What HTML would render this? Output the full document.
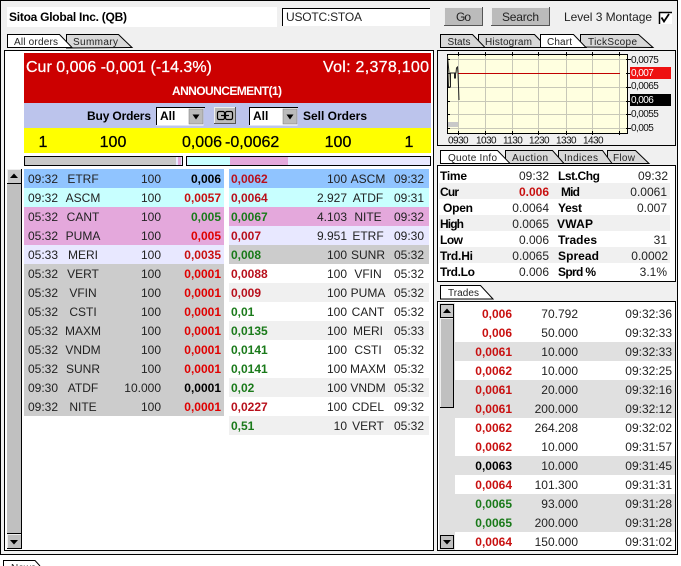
<!DOCTYPE html>
<html><head><meta charset="utf-8"><style>
html,body{margin:0;padding:0;background:#fff;width:681px;height:566px;overflow:hidden}
svg{display:block;font-family:"Liberation Sans",Arial,sans-serif;font-size:12px;fill:#222}
.e{text-anchor:end}.m{text-anchor:middle}.b{font-weight:bold}
.k{fill:#000}.w{fill:#fff}
.r1{fill:#e00000}.r2{fill:#b8101c}.r3{fill:#c81010}.g{fill:#1a7a1a}
.t{font-size:10px}
.y{font-size:16px;fill:#000;stroke:#000;stroke-width:.25px}
.cu{font-size:16px;fill:#fff;stroke:#fff;stroke-width:.25px}
.c{font-size:10px;fill:#111;letter-spacing:-.55px}
.tab{stroke:#000;stroke-width:1}
.q{font-weight:bold;fill:#000}
</style></head><body>
<svg width="681" height="566" viewBox="0 0 681 566" xmlns="http://www.w3.org/2000/svg">
<!-- frame -->
<rect x="0.5" y="0.5" width="677" height="554" fill="#f0f0f0" stroke="#000"/>
<rect x="678" y="0" width="3" height="566" fill="#fff"/>

<!-- top bar -->
<rect x="7" y="7" width="270" height="20" fill="#fff"/>
<text x="9" y="21" class="b k" textLength="118">Sitoa Global Inc. (QB)</text>
<rect x="282" y="8" width="148" height="18" fill="#fff"/>
<path d="M282.500 26V8.500H430" fill="none" stroke="#000"/>
<text x="286" y="21" textLength="76">USOTC:STOA</text>
<rect x="444" y="7" width="39" height="19" fill="#bbb"/>
<path d="M444.500 26V7.500H483" fill="none" stroke="#eee"/><path d="M444 25.500H482.500V7" fill="none" stroke="#555"/>
<text x="456" y="21" textLength="15">Go</text>
<rect x="491" y="7" width="59" height="19" fill="#bbb"/>
<path d="M491.500 26V7.500H550" fill="none" stroke="#eee"/><path d="M491 25.500H549.500V7" fill="none" stroke="#555"/>
<text x="502" y="21" textLength="37">Search</text>
<text x="564" y="21" textLength="88">Level 3 Montage</text>
<rect x="659" y="12" width="13" height="12" fill="#fff"/>
<path d="M659.500 24V12.500H672" fill="none" stroke="#000" stroke-width="1.500"/>
<path d="M661.500 17.500l2.500 4 5-7.500" fill="none" stroke="#000" stroke-width="1.800"/>

<!-- left tabs -->
<polygon class="tab" points="66.500,48 66.500,34.500 118.500,34.500 132,47.500" fill="#d8d8d8"/>
<polygon class="tab" points="7.500,47.500 7.500,34.500 59.500,34.500 72,47.500" fill="#fff"/>
<text x="14" y="45" class="t" textLength="44">All orders</text>
<text x="73" y="45" class="t" textLength="45">Summary</text>

<!-- left panel -->
<rect x="4.500" y="50.500" width="429" height="500" fill="#fff" stroke="#000"/>
<rect x="24" y="53" width="407" height="50" fill="#cc0000"/>
<text x="26" y="72" class="cu">Cur 0,006 -0,001 (-14.3%)</text>
<text x="323" y="72" class="cu" textLength="106">Vol: 2,378,100</text>
<text x="172" y="95" class="b w" textLength="110">ANNOUNCEMENT(1)</text>
<rect x="24" y="103" width="407" height="25" fill="#bcc4ec"/>
<text x="87" y="120" class="q" textLength="64">Buy Orders</text>
<rect x="156.500" y="107.500" width="47" height="18" fill="#fff"/>
<path d="M156.500 125V107.500H205" fill="none" stroke="#000"/>
<text x="160" y="120" class="q">All</text>
<rect x="189" y="109" width="14" height="15" fill="#bbb" stroke="#777" stroke-width=".5"/>
<path d="M192.500 114.500h7l-3.500 5z" fill="#000"/>
<rect x="214" y="107" width="22" height="17" fill="#bbb"/>
<path d="M214.500 124V107.500H236" fill="none" stroke="#eee"/><path d="M214 123.500H235.500V107" fill="none" stroke="#555"/>
<rect x="217.500" y="111.500" width="7" height="8" rx="1.500" fill="none" stroke="#000" stroke-width="1.200"/>
<rect x="225.500" y="111.500" width="7" height="8" rx="1.500" fill="none" stroke="#000" stroke-width="1.200"/>
<path d="M221 115.500h8" stroke="#000" stroke-width="1.200"/>
<rect x="249.500" y="107.500" width="48" height="18" fill="#fff"/>
<path d="M249.500 125V107.500H298" fill="none" stroke="#000"/>
<text x="253" y="120" class="q">All</text>
<rect x="283" y="109" width="14" height="15" fill="#bbb" stroke="#777" stroke-width=".5"/>
<path d="M286.500 114.500h7l-3.500 5z" fill="#000"/>
<text x="303" y="120" class="q" textLength="64">Sell Orders</text>
<rect x="24" y="128" width="407" height="25" fill="#ffff00"/>
<text x="43" y="147" class="m y">1</text>
<text x="113" y="147" class="m y">100</text>
<text x="222" y="147" class="e y">0,006</text>
<text x="225" y="147" class="y">-0,0062</text>
<text x="338" y="147" class="m y">100</text>
<text x="409" y="147" class="m y">1</text>
<!-- depth bars -->
<rect x="24.500" y="156.500" width="158" height="9" fill="#c8c8c8" stroke="#000"/>
<rect x="176" y="157" width="2" height="8" fill="#e8e8ff"/><rect x="178" y="157" width="3" height="8" fill="#e4a8dc"/><rect x="181" y="157" width="1" height="8" fill="#e8e8ff"/>
<rect x="186.500" y="156.500" width="244" height="9" fill="#e8e8ff" stroke="#000"/>
<rect x="188" y="157" width="42" height="8" fill="#c8ffff"/><rect x="230" y="157" width="58" height="8" fill="#e4a8dc"/>
<!-- left scrollbar -->
<rect x="7" y="169" width="15" height="380" fill="#c0c0c0"/>
<rect x="7.500" y="169.500" width="14" height="14" fill="#c8c8c8"/>
<path d="M7.500 183V169.500H21" fill="none" stroke="#eee"/>
<path d="M7 183.500H21.500V169M21.500 184V548" fill="none" stroke="#000"/>
<path d="M10 178h8l-4-4.500z" fill="#000"/>
<path d="M7 533.500H22" stroke="#000"/>
<rect x="8" y="534" width="13" height="14" fill="#c0c0c0"/>
<path d="M7.500 548V534.500H21" fill="none" stroke="#eee"/>
<path d="M7 548.500H21.500V534" fill="none" stroke="#000"/>
<path d="M10 540h8l-4 4.500z" fill="#000"/>

<!-- left rows -->
<rect x="24" y="169" width="200" height="19" fill="#90c4ff"/>
<rect x="24" y="188" width="200" height="19" fill="#c8ffff"/>
<rect x="24" y="207" width="200" height="38" fill="#e4a8dc"/>
<rect x="24" y="245" width="200" height="19" fill="#e8e8ff"/>
<rect x="24" y="264" width="200" height="152" fill="#cccccc"/>
<text x="28" y="183">09:32</text><text x="83" y="183" class="m">ETRF</text><text x="161" y="183" class="e">100</text><text x="221" y="183" class="e b k">0,006</text>
<text x="28" y="202">09:32</text><text x="83" y="202" class="m">ASCM</text><text x="161" y="202" class="e">100</text><text x="221" y="202" class="e b r3">0,0057</text>
<text x="28" y="221">05:32</text><text x="83" y="221" class="m">CANT</text><text x="161" y="221" class="e">100</text><text x="221" y="221" class="e b g">0,005</text>
<text x="28" y="240">05:32</text><text x="83" y="240" class="m">PUMA</text><text x="161" y="240" class="e">100</text><text x="221" y="240" class="e b r1">0,005</text>
<text x="28" y="259">05:33</text><text x="83" y="259" class="m">MERI</text><text x="161" y="259" class="e">100</text><text x="221" y="259" class="e b r3">0,0035</text>
<text x="28" y="278">05:32</text><text x="83" y="278" class="m">VERT</text><text x="161" y="278" class="e">100</text><text x="221" y="278" class="e b r1">0,0001</text>
<text x="28" y="297">05:32</text><text x="83" y="297" class="m">VFIN</text><text x="161" y="297" class="e">100</text><text x="221" y="297" class="e b r1">0,0001</text>
<text x="28" y="316">05:32</text><text x="83" y="316" class="m">CSTI</text><text x="161" y="316" class="e">100</text><text x="221" y="316" class="e b r1">0,0001</text>
<text x="28" y="335">05:32</text><text x="83" y="335" class="m">MAXM</text><text x="161" y="335" class="e">100</text><text x="221" y="335" class="e b r1">0,0001</text>
<text x="28" y="354">05:32</text><text x="83" y="354" class="m">VNDM</text><text x="161" y="354" class="e">100</text><text x="221" y="354" class="e b r1">0,0001</text>
<text x="28" y="373">05:32</text><text x="83" y="373" class="m">SUNR</text><text x="161" y="373" class="e">100</text><text x="221" y="373" class="e b r1">0,0001</text>
<text x="28" y="392">09:30</text><text x="83" y="392" class="m">ATDF</text><text x="161" y="392" class="e">10.000</text><text x="221" y="392" class="e b k">0,0001</text>
<text x="28" y="411">09:32</text><text x="83" y="411" class="m">NITE</text><text x="161" y="411" class="e">100</text><text x="221" y="411" class="e b r1">0,0001</text>

<!-- right rows -->
<rect x="229" y="169" width="200" height="19" fill="#90c4ff"/>
<rect x="229" y="188" width="200" height="19" fill="#c8ffff"/>
<rect x="229" y="207" width="200" height="19" fill="#e4a8dc"/>
<rect x="229" y="226" width="200" height="19" fill="#e8e8ff"/>
<rect x="229" y="245" width="200" height="19" fill="#cccccc"/>
<rect x="229" y="283" width="200" height="19" fill="#f0f0f0"/>
<rect x="229" y="321" width="200" height="19" fill="#f0f0f0"/>
<rect x="229" y="378" width="200" height="19" fill="#f0f0f0"/>
<rect x="229" y="416" width="200" height="19" fill="#f0f0f0"/>
<text x="231" y="183" class="b r2">0,0062</text><text x="347" y="183" class="e">100</text><text x="368" y="183" class="m">ASCM</text><text x="424" y="183" class="e">09:32</text>
<text x="231" y="202" class="b r2">0,0064</text><text x="347" y="202" class="e">2.927</text><text x="368" y="202" class="m">ATDF</text><text x="424" y="202" class="e">09:31</text>
<text x="231" y="221" class="b g">0,0067</text><text x="347" y="221" class="e">4.103</text><text x="368" y="221" class="m">NITE</text><text x="424" y="221" class="e">09:32</text>
<text x="231" y="240" class="b r2">0,007</text><text x="347" y="240" class="e">9.951</text><text x="368" y="240" class="m">ETRF</text><text x="424" y="240" class="e">09:30</text>
<text x="231" y="259" class="b g">0,008</text><text x="347" y="259" class="e">100</text><text x="368" y="259" class="m">SUNR</text><text x="424" y="259" class="e">05:32</text>
<text x="231" y="278" class="b r2">0,0088</text><text x="347" y="278" class="e">100</text><text x="368" y="278" class="m">VFIN</text><text x="424" y="278" class="e">05:32</text>
<text x="231" y="297" class="b r2">0,009</text><text x="347" y="297" class="e">100</text><text x="368" y="297" class="m">PUMA</text><text x="424" y="297" class="e">05:32</text>
<text x="231" y="316" class="b g">0,01</text><text x="347" y="316" class="e">100</text><text x="368" y="316" class="m">CANT</text><text x="424" y="316" class="e">05:32</text>
<text x="231" y="335" class="b g">0,0135</text><text x="347" y="335" class="e">100</text><text x="368" y="335" class="m">MERI</text><text x="424" y="335" class="e">05:33</text>
<text x="231" y="354" class="b g">0,0141</text><text x="347" y="354" class="e">100</text><text x="368" y="354" class="m">CSTI</text><text x="424" y="354" class="e">05:32</text>
<text x="231" y="373" class="b g">0,0141</text><text x="347" y="373" class="e">100</text><text x="368" y="373" class="m">MAXM</text><text x="424" y="373" class="e">05:32</text>
<text x="231" y="392" class="b g">0,02</text><text x="347" y="392" class="e">100</text><text x="368" y="392" class="m">VNDM</text><text x="424" y="392" class="e">05:32</text>
<text x="231" y="411" class="b r2">0,0227</text><text x="347" y="411" class="e">100</text><text x="368" y="411" class="m">CDEL</text><text x="424" y="411" class="e">09:32</text>
<text x="231" y="430" class="b g">0,51</text><text x="347" y="430" class="e">10</text><text x="368" y="430" class="m">VERT</text><text x="424" y="430" class="e">05:32</text>

<!-- right tabs top -->
<polygon class="tab" points="580.500,47 580.500,34.500 638.500,34.500 653,47.500" fill="#d8d8d8"/>
<polygon class="tab" points="478.500,47.500 478.500,34.500 534.500,34.500 547,47.500" fill="#d8d8d8"/>
<polygon class="tab" points="440.500,47.500 440.500,34.500 472.500,34.500 485,47.500" fill="#d8d8d8"/>
<polygon class="tab" points="540.500,47.500 540.500,34.500 573.500,34.500 586,47.500" fill="#fff"/>
<text x="447.500" y="45" class="t" textLength="23">Stats</text>
<text x="485" y="45" class="t" textLength="47">Histogram</text>
<text x="547" y="45" class="t" textLength="25">Chart</text>
<text x="588" y="45" class="t" textLength="49">TickScope</text>

<!-- chart panel -->
<rect x="437.500" y="50.500" width="238" height="95" fill="#f0f0f0" stroke="#000"/>
<rect x="447" y="54" width="181" height="79" fill="#ffffe0"/>
<path d="M458.500 54V133M485.500 54V133M512.500 54V133M538.500 54V133M566.500 54V133M592.500 54V133M619.500 54V133M447 59.500H628M447 87.500H628M447 101.500H628M447 114.500H628M447 128.500H628" stroke="#c8c8b8" fill="none"/>
<rect x="447.500" y="54.500" width="180" height="79" fill="none" stroke="#000"/>
<path d="M458.500 52V56M485.500 52V56M512.500 52V56M538.500 52V56M566.500 52V56M592.500 52V56M619.500 52V56M447 59.500H450M447 73.500H450M447 87.500H450M447 101.500H450M447 114.500H450M447 128.500H450M626 59.500H631M626 73.500H631M626 87.500H631M626 101.500H631M626 114.500H631M626 128.500H631M458.500 131V135M485.500 131V135M512.500 131V135M538.500 131V135M566.500 131V135M592.500 131V135M619.500 131V135" stroke="#000"/>
<rect x="448" y="122" width="10" height="5" fill="#c8c8c8"/>
<path d="M458 73.500H620" stroke="#c00000" stroke-width="1"/>
<path d="M447.500 56L449 73 448.500 87H450.500V73H454.500V78H455.500V73H456L456.500 68 457.500 67 458 73 459 100" fill="none" stroke="#222" stroke-width="1"/>
<rect x="630" y="67" width="41" height="12" fill="#ee1111"/>
<rect x="630" y="94" width="41" height="12" fill="#000"/>
<text x="631" y="63" class="c">0,0075</text>
<text x="631" y="76" class="c" style="fill:#fff">0,007</text>
<text x="631" y="89" class="c">0,0065</text>
<text x="631" y="103" class="c" style="fill:#fff">0,006</text>
<text x="631" y="117" class="c">0,0055</text>
<text x="631" y="131" class="c">0,005</text>
<text x="448" y="143.500" class="c">0930</text>
<text x="476" y="143.500" class="c">1030</text>
<text x="503" y="143.500" class="c">1130</text>
<text x="529" y="143.500" class="c">1230</text>
<text x="556" y="143.500" class="c">1330</text>
<text x="583" y="143.500" class="c">1430</text>

<!-- quote tabs -->
<polygon class="tab" points="607.500,163.500 607.500,150.500 635.500,150.500 649,163.500" fill="#d8d8d8"/>
<polygon class="tab" points="558.500,163.500 558.500,150.500 602.500,150.500 612,163.500" fill="#d8d8d8"/>
<polygon class="tab" points="505.500,163.500 505.500,150.500 552.500,150.500 564,163.500" fill="#d8d8d8"/>
<polygon class="tab" points="440.500,163.500 440.500,150.500 497.500,150.500 510,163.500" fill="#fff"/>
<text x="448" y="161" class="t" textLength="49">Quote Info</text>
<text x="512" y="161" class="t" textLength="36">Auction</text>
<text x="564" y="161" class="t" textLength="34">Indices</text>
<text x="613" y="161" class="t" textLength="22">Flow</text>

<!-- quote panel -->
<rect x="437.500" y="165.500" width="238" height="116" fill="#fff" stroke="#000"/>
<rect x="439" y="183" width="231" height="16" fill="#f0f0f0"/>
<rect x="439" y="215" width="231" height="16" fill="#f0f0f0"/>
<rect x="439" y="247" width="231" height="16" fill="#f0f0f0"/>
<text x="440" y="180" class="q" textLength="27">Time</text><text x="549" y="180" class="e">09:32</text><text x="558" y="180" class="q" textLength="42">Lst.Chg</text><text x="668" y="180" class="e">09:32</text>
<text x="440" y="196" class="q" textLength="19">Cur</text><text x="549" y="196" class="e b r3">0.006</text><text x="561" y="196" class="q" textLength="19">Mid</text><text x="667" y="196" class="e">0.0061</text>
<text x="443" y="212" class="q" textLength="30">Open</text><text x="549" y="212" class="e">0.0064</text><text x="558" y="212" class="q" textLength="24">Yest</text><text x="667" y="212" class="e">0.007</text>
<text x="440" y="228" class="q" textLength="24">High</text><text x="549" y="228" class="e">0.0065</text><text x="557" y="228" class="q" textLength="36">VWAP</text>
<text x="440" y="244" class="q" textLength="23">Low</text><text x="549" y="244" class="e">0.006</text><text x="558" y="244" class="q" textLength="39">Trades</text><text x="667" y="244" class="e">31</text>
<text x="440" y="260" class="q" textLength="33">Trd.Hi</text><text x="549" y="260" class="e">0.0065</text><text x="558" y="260" class="q" textLength="41">Spread</text><text x="668" y="260" class="e">0.0002</text>
<text x="440" y="276" class="q" textLength="35">Trd.Lo</text><text x="549" y="276" class="e">0.006</text><text x="558" y="276" class="q" textLength="38">Sprd %</text><text x="667" y="276" class="e">3.1%</text>

<!-- trades -->
<polygon class="tab" points="440.500,299 440.500,285.500 480.500,285.500 493,299" fill="#fff"/>
<text x="448" y="296" class="t" textLength="31">Trades</text>
<rect x="437.500" y="301.500" width="238" height="249" fill="#fff" stroke="#000"/>
<rect x="439" y="303" width="16" height="247" fill="#e0e0e0"/>
<rect x="455" y="342" width="220" height="19" fill="#e0e0e0"/>
<rect x="455" y="380" width="220" height="38" fill="#e0e0e0"/>
<rect x="455" y="456" width="220" height="19" fill="#e0e0e0"/>
<rect x="455" y="494" width="220" height="38" fill="#e0e0e0"/>
<rect x="440.500" y="304.500" width="13" height="13" fill="#c8c8c8" stroke="#000"/>
<path d="M443 313h8l-4-4.500z" fill="#000"/>
<rect x="440" y="318" width="14" height="89" fill="#c0c0c0"/>
<path d="M440.500 407V318.500H454" fill="none" stroke="#eee"/><path d="M440 407.500H453.500V318" fill="none" stroke="#000"/>
<rect x="440.500" y="535.500" width="13" height="13" fill="#c0c0c0" stroke="#000"/>
<path d="M443 540h8l-4 4.500z" fill="#000"/>
<text x="512" y="318" class="e b r3">0,006</text><text x="578" y="318" class="e">70.792</text><text x="672" y="318" class="e">09:32:36</text>
<text x="512" y="337" class="e b r3">0,006</text><text x="578" y="337" class="e">50.000</text><text x="672" y="337" class="e">09:32:33</text>
<text x="512" y="356" class="e b r3">0,0061</text><text x="578" y="356" class="e">10.000</text><text x="672" y="356" class="e">09:32:33</text>
<text x="512" y="375" class="e b r3">0,0062</text><text x="578" y="375" class="e">10.000</text><text x="672" y="375" class="e">09:32:25</text>
<text x="512" y="394" class="e b r3">0,0061</text><text x="578" y="394" class="e">20.000</text><text x="672" y="394" class="e">09:32:16</text>
<text x="512" y="413" class="e b r3">0,0061</text><text x="578" y="413" class="e">200.000</text><text x="672" y="413" class="e">09:32:12</text>
<text x="512" y="432" class="e b r3">0,0062</text><text x="578" y="432" class="e">264.208</text><text x="672" y="432" class="e">09:32:02</text>
<text x="512" y="451" class="e b r3">0,0062</text><text x="578" y="451" class="e">10.000</text><text x="672" y="451" class="e">09:31:57</text>
<text x="512" y="470" class="e b k">0,0063</text><text x="578" y="470" class="e">10.000</text><text x="672" y="470" class="e">09:31:45</text>
<text x="512" y="489" class="e b r3">0,0064</text><text x="578" y="489" class="e">101.300</text><text x="672" y="489" class="e">09:31:31</text>
<text x="512" y="508" class="e b g">0,0065</text><text x="578" y="508" class="e">93.000</text><text x="672" y="508" class="e">09:31:28</text>
<text x="512" y="527" class="e b g">0,0065</text><text x="578" y="527" class="e">200.000</text><text x="672" y="527" class="e">09:31:28</text>
<text x="512" y="546" class="e b r3">0,0064</text><text x="578" y="546" class="e">150.000</text><text x="672" y="546" class="e">09:31:02</text>

<!-- bottom tab -->
<path d="M3.500 566V560.500H35L40 566" fill="#fff" stroke="#000"/>
<text x="11" y="571" class="t">News</text>
</svg>
</body></html>
